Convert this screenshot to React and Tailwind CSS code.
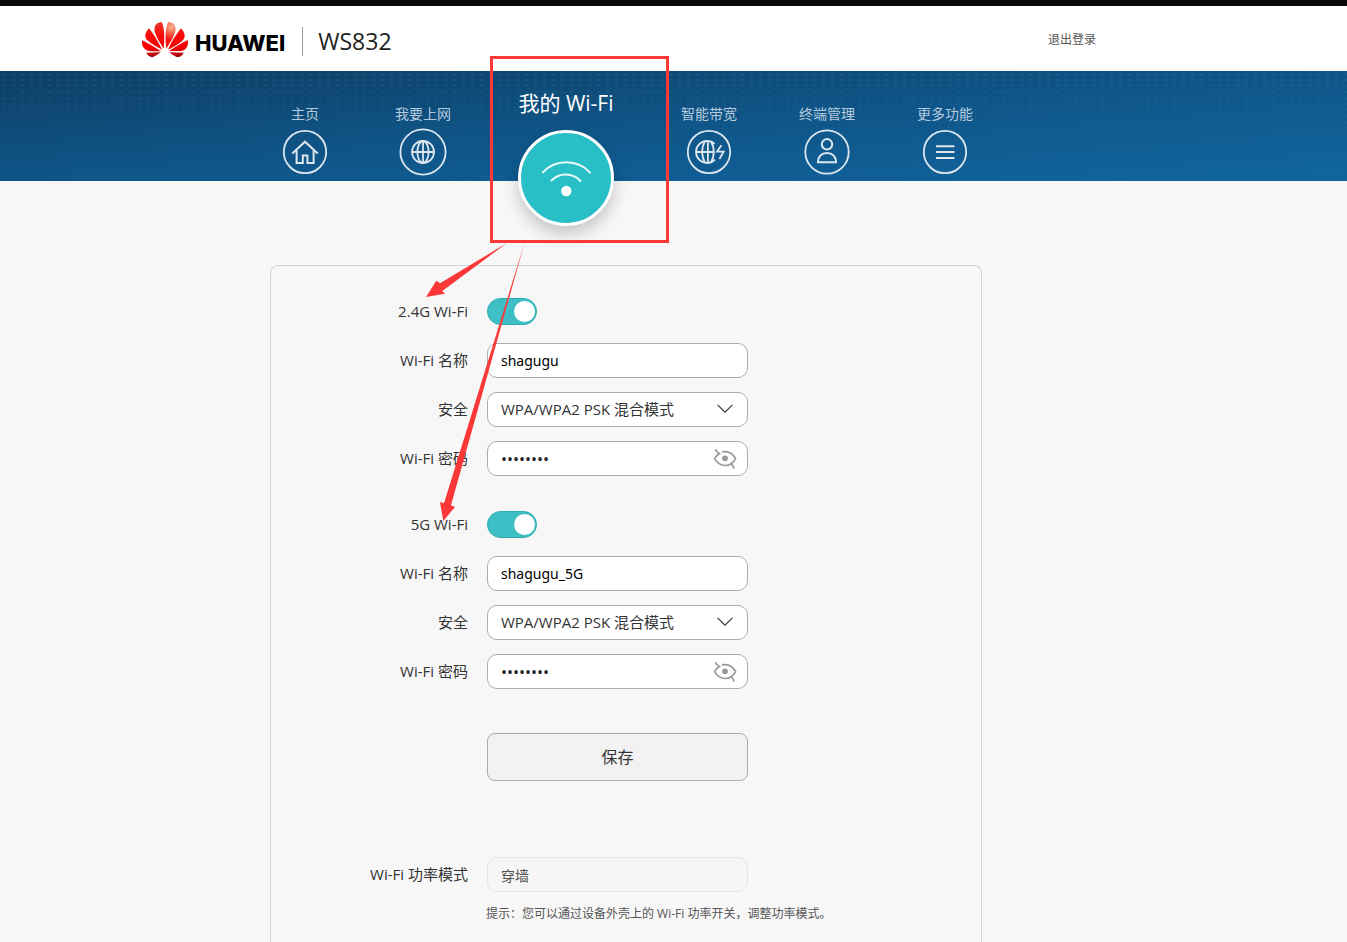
import { useState } from "react";

function HuaweiMark() {
  return (
    <svg className="h-[35px] w-[46px]" viewBox="0 2.9 24 18.1" preserveAspectRatio="none" aria-hidden="true">
      <defs>
        <linearGradient id="petal" gradientUnits="userSpaceOnUse" x1="0" y1="3" x2="0" y2="21">
          <stop offset="0" stopColor="#e8372c" />
          <stop offset="0.35" stopColor="#fb0d0d" />
          <stop offset="0.75" stopColor="#f40000" />
          <stop offset="1" stopColor="#a30a12" />
        </linearGradient>
        <radialGradient id="petalLight" gradientUnits="userSpaceOnUse" cx="15.4" cy="5.6" r="6.5">
          <stop offset="0" stopColor="#f9b493" />
          <stop offset="0.5" stopColor="#f4654c" />
          <stop offset="1" stopColor="#f41414" />
        </radialGradient>
      </defs>
      <g fill="url(#petal)">
        <path d="M3.67 6.14S1.82 7.91 1.72 9.78v.35c.08 1.51 1.22 2.4 1.22 2.4 1.83 1.79 6.26 4.04 7.3 4.55 0 0 .06.03.1-.01l.02-.04v-.04C7.52 10.8 3.67 6.14 3.67 6.14z" />
        <path d="M9.65 18.6c-.02-.08-.1-.08-.1-.08l-7.38.26c.8 1.43 2.15 2.53 3.56 2.2.96-.25 3.16-1.78 3.88-2.3.06-.05.04-.09.04-.09z" />
        <path d="M9.73 17.82C6.49 15.63.21 12.28.21 12.28c-.15.46-.2.9-.21 1.3v.07c0 1.07.4 1.82.4 1.82.8 1.69 2.34 2.2 2.34 2.2.7.3 1.4.31 1.4.31.12.02 4.4 0 5.54 0 .05 0 .08-.05.08-.05v-.06c0-.03-.03-.05-.03-.05z" />
        <path d="M9.06 3.19a3.42 3.42 0 00-2.57 3.15v.41c.03.6.16 1.05.16 1.05.66 2.9 3.86 7.65 4.55 8.65.05.05.1.03.1.03a.1.1 0 00.06-.1c1.06-10.6-1.11-13.42-1.11-13.42-.32.02-1.19.23-1.19.23z" />
        <path fill="url(#petalLight)" d="M17.36 5.46s-.49-1.8-2.44-2.28c0 0-.57-.14-1.17-.22 0 0-2.18 2.81-1.12 13.43.01.07.06.08.06.08.07.03.1-.03.1-.03.72-1.03 3.9-5.76 4.55-8.64 0 0 .36-1.4.02-2.34z" />
        <path d="M14.44 18.53s-.07 0-.09.05c0 0-.01.07.03.1.7.51 2.85 2 3.88 2.3 0 0 .16.05.43.06h.14c.69-.02 1.9-.37 3-2.26l-7.4-.25z" />
        <path d="M22.27 10.12c.14-2.06-1.94-3.97-1.94-3.98 0 0-3.85 4.66-6.67 10.8 0 0-.03.08.02.13l.04.01h.06c1.06-.53 5.46-2.77 7.28-4.54 0 0 1.15-.93 1.21-2.42z" />
        <path d="M23.79 12.26s-6.28 3.37-9.52 5.55c0 0-.05.04-.03.11 0 0 .03.06.07.06 1.16 0 5.56 0 5.67-.02 0 0 .57-.02 1.27-.29 0 0 1.56-.5 2.37-2.27 0 0 .73-1.45.17-3.14z" />
      </g>
    </svg>
  );
}

function NavIcon({ r, children }) {
  return (
    <svg className="size-12" viewBox="0 0 48 48" fill="none" stroke="#dbe6ef" strokeWidth="2" aria-hidden="true">
      <circle cx="24" cy="24" r={r} strokeWidth="1.8" />
      {children}
    </svg>
  );
}

const homeIcon = (
  <NavIcon r={21.2}>
    <path d="M11.3 25.5 24 13.7l12.7 11.8M15.6 22.5v12.4h6.2v-7.4h4.6v7.4h6.2V22.5" />
  </NavIcon>
);

const globeIcon = (
  <NavIcon r={22.6}>
    <g strokeWidth="1.8">
      <circle cx="24" cy="24" r="11" />
      <ellipse cx="24" cy="24" rx="5.6" ry="11" />
      <path d="M24 13v22M13 24h22" />
    </g>
  </NavIcon>
);

const boostIcon = (
  <NavIcon r={21.2}>
    <g strokeWidth="1.8">
      <path d="M29.6 16A11 11 0 1 0 30 31.6" />
      <path d="M26 13.8C29.6 19 29.6 29 26 34.2M19.8 13.8C16.4 19 16.4 29 19.8 34.2" />
      <path d="M22.9 13v22M12 24h17" />
      <path d="M36.5 17.3 32 23.6h6.6L34.4 31" />
    </g>
  </NavIcon>
);

const userIcon = (
  <NavIcon r={21.7}>
    <circle cx="24" cy="16.3" r="5.2" />
    <path d="M14.9 34.2c0-5.6 3.7-9.2 9.1-9.2s9.1 3.6 9.1 9.2z" />
  </NavIcon>
);

const menuIcon = (
  <NavIcon r={21.2}>
    <path d="M15 18.2h18.5M15 24.1h18.5M15 30h18.5" />
  </NavIcon>
);

function NavItem({ label, icon }) {
  return (
    <a href="#" className="flex w-[118px] flex-col items-center gap-1 pt-[33px] text-sm leading-5 text-[#b4cbdd]">
      {label}
      {icon}
    </a>
  );
}

function Callout() {
  return (
    <svg
      className="pointer-events-none absolute -top-[21px] -left-[62px] z-10 h-[480px] w-[260px] max-w-none"
      viewBox="420 50 260 480"
      aria-hidden="true"
    >
      <rect x="491.5" y="57.5" width="176" height="184" fill="none" stroke="#fb3838" strokeWidth="3" />
      <g fill="#fb3838">
        <path d="M507 243 440 283.3 436.3 280.7 426 297 445 293.7 442.3 291z" />
        <path d="M524.5 243 444 503.3 440 502 443.3 521 455 507 451 505.3z" />
      </g>
    </svg>
  );
}

function ActiveNavItem() {
  return (
    <div className="relative flex w-[168px] flex-col items-center">
      <a href="#" aria-current="page" className="flex flex-col items-center gap-[13px] pt-[18px] text-[21px] leading-7 text-white">
        我的 Wi-Fi
        <span className="flex size-24 items-center justify-center rounded-full border-3 border-white bg-[#29bfc7] shadow-[0_8px_16px_rgba(0,0,0,0.2)]">
          <svg className="size-[90px]" viewBox="0 0 90 90" fill="none" stroke="#eefafa" strokeWidth="2" strokeLinecap="round" aria-hidden="true">
            <path d="M22 39.3C34.5 26 56.5 26 69 39.6" />
            <path d="M30.5 47.5C38.5 39.5 51.5 39.5 59.5 48" />
            <circle cx="45.3" cy="58" r="5.2" fill="#fff" stroke="none" />
          </svg>
        </span>
      </a>
      <Callout />
    </div>
  );
}

function Row({ id, label, children }) {
  return (
    <div className="flex min-h-[35px] items-center gap-[19px]">
      <label htmlFor={id} className="w-[197px] shrink-0 text-right text-[15px] text-[#333]">
        {label}
      </label>
      {children}
    </div>
  );
}

const fieldClass = "h-[35px] w-full rounded-[10px] border border-[#acacac] bg-white px-[13px] outline-none";

function Band({ id, title, name }) {
  const [on, setOn] = useState(true);
  const [visible, setVisible] = useState(false);
  return (
    <div className="flex flex-col gap-3.5">
      <Row id={`${id}-on`} label={title}>
        <input
          id={`${id}-on`}
          type="checkbox"
          role="switch"
          checked={on}
          onChange={(e) => setOn(e.target.checked)}
          className="flex h-[27px] w-[50px] appearance-none items-center rounded-full border border-[#b5b5b5] bg-[#ccc] px-px before:size-[21px] before:rounded-full before:bg-white checked:justify-end checked:border-[#2aabb1] checked:bg-[#3ebfc5]"
        />
      </Row>
      <Row id={`${id}-name`} label="Wi-Fi 名称">
        <div className="w-[261px]">
          <input id={`${id}-name`} type="text" defaultValue={name} className={`${fieldClass} font-['Noto_Sans',sans-serif] text-black`} />
        </div>
      </Row>
      <Row id={`${id}-security`} label="安全">
        <div className="relative w-[261px]">
          <select id={`${id}-security`} className={`${fieldClass} appearance-none text-[15px] text-[#333]`}>
            <option>WPA/WPA2 PSK 混合模式</option>
          </select>
          <svg className="pointer-events-none absolute top-3 right-[15px] h-[10px] w-4" viewBox="0 0 16 10" fill="none" stroke="#333" strokeWidth="1.1" aria-hidden="true">
            <path d="M.6.8 8 8.2 15.4.8" />
          </svg>
        </div>
      </Row>
      <Row id={`${id}-password`} label="Wi-Fi 密码">
        <div className="relative w-[261px]">
          <input
            id={`${id}-password`}
            type={visible ? "text" : "password"}
            defaultValue="shagugu1"
            className={`${fieldClass} text-base text-[#222]`}
          />
          <button type="button" aria-label="显示密码" onClick={() => setVisible(!visible)} className="absolute top-[7px] right-[11px]">
            <svg className="h-[22px] w-6" viewBox="0 0 24 22" fill="none" stroke="#999" strokeWidth="1.7" aria-hidden="true">
              <path d="M2.6 1c-.2 2.600 1.400 2.700 4 4.600C4.200 6.800 2.600 8.600 1.600 10.600c2.600 4.600 6.200 6.900 10.400 6.900 2.400 0 4.400-.6 6.100-1.700 1.400 1.300 2.900 2.300 2.700 5" />
              <path d="M9 3.900c5.400-1.200 10.600 1.100 13.600 6.700-1 1.900-2.500 3.900-4.500 5.200" />
              <circle cx="12" cy="10.300" r="2.900" fill="#999" stroke="none" />
            </svg>
          </button>
        </div>
      </Row>
    </div>
  );
}

export default function App() {
  return (
    <div className="flex min-h-screen flex-col bg-[#f7f7f7] font-['Open_Sans','Noto_Sans_CJK_SC',sans-serif] text-sm">
      <div className="h-1.5 bg-[#0a0a0a]" />
      <header className="bg-white pr-[95px]">
        <div className="mx-auto flex h-[65px] max-w-[968px] items-center justify-between pt-0.5 pr-3.5">
          <div className="flex items-center">
            <HuaweiMark />
            <span className="ml-[7px] pt-1.5 font-['Inter',sans-serif] text-[22px] leading-7 font-extrabold text-black">HUAWEI</span>
            <span className="mt-1 ml-[17px] h-[29px] w-px bg-[#999]" />
            <span className="ml-[15px] pt-0.5 text-[23px] leading-8 text-[#222]">WS832</span>
          </div>
          <a href="#" className="text-xs text-[#555]">退出登录</a>
        </div>
      </header>

      <nav className="relative h-[110px] bg-linear-to-br from-[#0d3f65] via-[#0f5588] to-[#1166a0] pr-[97px]">
        <div className="absolute inset-0 bg-[radial-gradient(ellipse_3px_1px,rgba(90,170,190,0.28),transparent)] mask-[linear-gradient(black,transparent_80%)] bg-size-[9px_6px]" />
        <div className="relative flex items-start justify-center">
          <NavItem label="主页" icon={homeIcon} />
          <NavItem label="我要上网" icon={globeIcon} />
          <ActiveNavItem />
          <NavItem label="智能带宽" icon={boostIcon} />
          <NavItem label="终端管理" icon={userIcon} />
          <NavItem label="更多功能" icon={menuIcon} />
        </div>
      </nav>

      <main className="flex flex-1 flex-col pt-[84px] pr-[95px]">
        <form onSubmit={(e) => e.preventDefault()} className="mx-auto w-full max-w-[712px] flex-1 rounded-t-lg border border-b-0 border-[#cdd5dd] pt-7">
          <div className="flex flex-col gap-[31px]">
            <Band id="wifi24" title="2.4G Wi-Fi" name="shagugu" />
            <Band id="wifi5" title="5G Wi-Fi" name="shagugu_5G" />
          </div>
          <div className="mt-11 pl-[216px]">
            <button type="submit" className="h-12 w-[261px] rounded-lg border border-[#acacac] bg-[#f2f2f2] text-base text-[#333]">
              保存
            </button>
          </div>
          <div className="mt-[76px]">
            <Row id="power" label="Wi-Fi 功率模式">
              <div className="w-[261px]">
                <input id="power" type="text" disabled value="穿墙" className="h-[35px] w-full rounded-[10px] border border-[#e6e6e6] bg-[#f6f6f6] px-[13px] text-[#555]" />
              </div>
            </Row>
            <p className="mt-3 pl-[215px] text-xs leading-5 text-[#555]">提示：您可以通过设备外壳上的 Wi-Fi 功率开关，调整功率模式。</p>
          </div>
        </form>
      </main>
    </div>
  );
}
